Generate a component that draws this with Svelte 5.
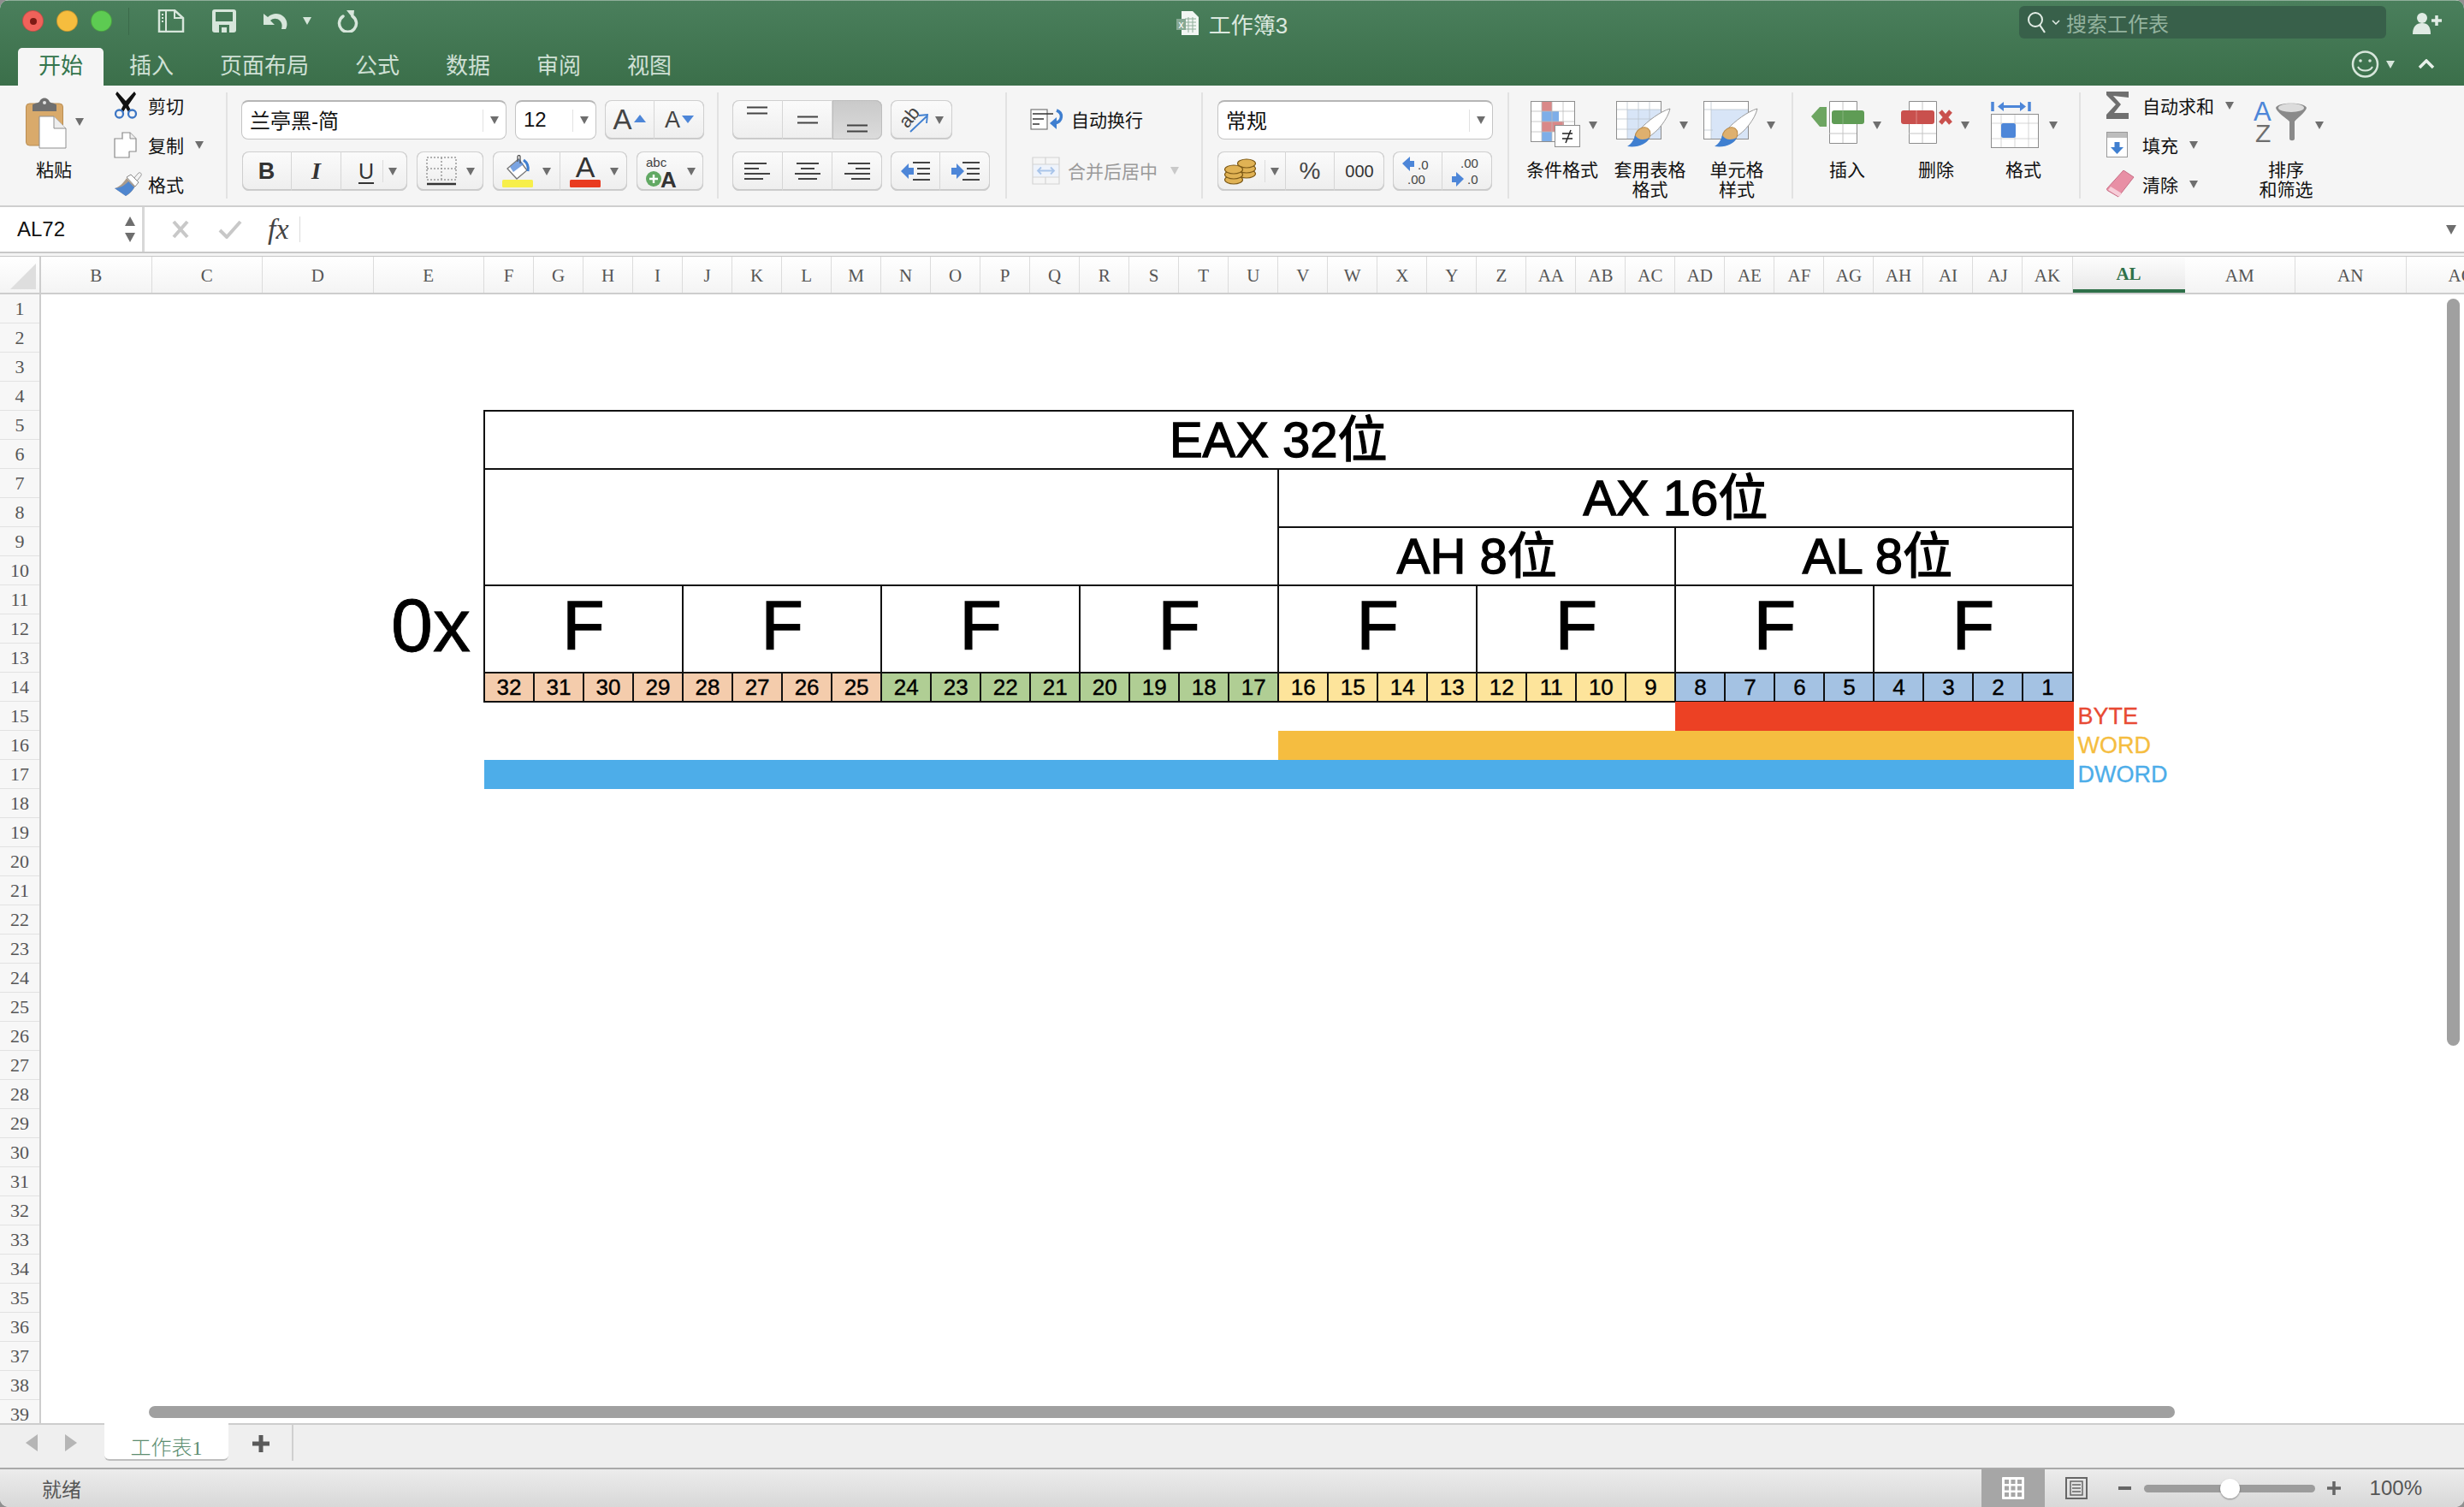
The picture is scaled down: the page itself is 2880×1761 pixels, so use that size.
<script>
  const tabs = ['开始', '插入', '页面布局', '公式', '数据', '审阅', '视图'];

  const wideCols = ['B', 'C', 'D', 'E'];
  const letters = 'FGHIJKLMNOPQRSTUVWXYZ'.split('');
  const narrowCols = [...letters, 'AA', 'AB', 'AC', 'AD', 'AE', 'AF', 'AG', 'AH', 'AI', 'AJ', 'AK'];
  const rows = Array.from({ length: 39 }, (_, i) => i + 1);

  const nibbles = Array.from({ length: 8 }, (_, i) => i);
  const bits = Array.from({ length: 32 }, (_, i) => 32 - i);
  function bitClass(n) {
    if (n > 24) return 'peach';
    if (n > 16) return 'green';
    if (n > 8) return 'yellow';
    return 'blue';
  }
</script>

<div class="window">
  <header class="titlebar">
    <div class="title-row">
      <div class="title-left">
        <span class="light red"><i></i></span>
        <span class="light amber"></span>
        <span class="light lime"></span>
        <span class="title-div"></span>
        <svg class="qa-doc" width="32" height="27" viewBox="0 0 32 27"><path d="M2 1h18l10 9v16H2z" fill="none" stroke="#d7e6db" stroke-width="2.5"/><path d="M10 1v25M20 1v9h10" fill="none" stroke="#d7e6db" stroke-width="2"/><path d="M5 6h2M5 10h2M5 14h2" stroke="#d7e6db" stroke-width="2"/></svg>
        <svg class="qa-save" width="28" height="27" viewBox="0 0 28 27"><path d="M3 0h22a3 3 0 0 1 3 3v21a3 3 0 0 1-3 3H3a3 3 0 0 1-3-3V3a3 3 0 0 1 3-3z" fill="#d7e6db"/><rect x="4" y="3" width="20" height="11" fill="#467a57"/><rect x="8" y="18" width="12" height="9" fill="#467a57"/><rect x="11" y="21" width="6" height="6" fill="#d7e6db"/></svg>
        <svg class="qa-undo" width="30" height="20" viewBox="0 0 30 20"><path d="M0 1v13h13L8 9c3-3 8-3 11 0s3 6 2 10h5c3-6 1-12-3-15S12-1 5 5z" fill="#d7e6db"/></svg>
        <span class="caret light-caret qa-caret"></span>
        <svg class="qa-redo" width="25" height="26" viewBox="0 0 25 26"><path d="M7 7a10 10 0 1 0 11 0" fill="none" stroke="#d7e6db" stroke-width="3.5" stroke-linecap="round"/><path d="M11 0l9 0-1 10z" fill="#d7e6db"/></svg>
      </div>
      <div class="doc-title">
        <svg width="27" height="28" viewBox="0 0 27 28"><path d="M6 0h13l7 7v21H6z" fill="#f2f6f3"/><path d="M10 9h13M10 13h13M10 17h13M10 21h13M14 7v18M19 7v18" stroke="#8fae9a" stroke-width="1"/><rect x="0" y="9" width="11" height="13" fill="#86a893"/><text x="2.5" y="19.5" class="t-x">x</text></svg>
        <span>工作簿3</span>
      </div>
      <div class="title-right">
        <div class="search">
          <svg width="24" height="26" viewBox="0 0 24 26"><circle cx="10" cy="10" r="8" fill="none" stroke="#e3ede6" stroke-width="2"/><path d="M15 16l6 9" stroke="#e3ede6" stroke-width="2.2"/></svg>
          <svg class="search-chev" width="10" height="6" viewBox="0 0 10 6"><path d="M1 1l4 4 4-4" fill="none" stroke="#e3ede6" stroke-width="1.5"/></svg>
          <span>搜索工作表</span>
        </div>
        <svg class="user-add" width="35" height="25" viewBox="0 0 35 25"><circle cx="11" cy="6" r="6" fill="#e0ebe4"/><path d="M0 25c0-9 4-13 11-13s10 4 10 13z" fill="#e0ebe4"/><path d="M22 9h12M28 3v12" stroke="#e0ebe4" stroke-width="3.5"/></svg>
      </div>
    </div>
    <div class="tab-row">
      <nav class="tabs">
        {#each tabs as t, i}
          <span class="tab" class:active={i === 0}>{t}</span>
        {/each}
      </nav>
      <div class="tab-tools">
        <svg width="33" height="32" viewBox="0 0 33 32"><circle cx="16.5" cy="16" r="14.5" fill="none" stroke="#d7e6db" stroke-width="2.5"/><circle cx="11" cy="12" r="1.8" fill="#d7e6db"/><circle cx="22" cy="12" r="1.8" fill="#d7e6db"/><path d="M8 19c3 6 14 6 17 0" fill="none" stroke="#d7e6db" stroke-width="2"/></svg>
        <span class="caret light-caret"></span>
        <svg class="collapse" width="20" height="12" viewBox="0 0 20 12"><path d="M2 10l8-8 8 8" fill="none" stroke="#e8f0ea" stroke-width="3.5"/></svg>
      </div>
    </div>
  </header>

  <section class="ribbon">
    <div class="group g-clip">
      <div class="big b-paste">
        <div class="big-icon">
          <svg width="48" height="60" viewBox="0 0 48 60"><rect x="0.500" y="7" width="43" height="49" rx="4" fill="#d9aa6b" stroke="#b98d52"/><path d="M8 16V9c0-2 5-2 8-4 2-6 10-6 12 0 3 2 8 2 8 4v7z" fill="#6f6f6f"/><circle cx="22" cy="6" r="2" fill="#e2e2e2"/><path d="M16 22h17l14 14v23H16z" fill="#fff" stroke="#8f8f8f"/><path d="M33 22v14h14" fill="#eeeeee" stroke="#8f8f8f"/></svg>
          <span class="caret"></span>
        </div>
        <div class="big-label">粘贴</div>
      </div>
      <div class="stack s-clip">
        <div class="small">
          <span class="slot"><svg width="28" height="32" viewBox="0 0 28 32"><path d="M4 0l10 11L24 0l2 3-9 13 3 6-3 2-3-5-3 5-3-2 3-6L2 3z" fill="#111"/><circle cx="6.500" cy="26" r="4.500" fill="none" stroke="#3d76c4" stroke-width="2.300"/><circle cx="21.500" cy="26" r="4.500" fill="none" stroke="#3d76c4" stroke-width="2.300"/></svg></span>
          <span>剪切</span>
        </div>
        <div class="small">
          <span class="slot"><svg width="27" height="31" viewBox="0 0 27 31"><path d="M10 1h9l7 7v15H10z" fill="#fff" stroke="#8a8a8a" stroke-width="1.200"/><path d="M19 1v7h7" fill="#eee" stroke="#8a8a8a"/><path d="M10 8H1v22h17v-7" fill="#fff" stroke="#8a8a8a" stroke-width="1.200"/></svg></span>
          <span>复制</span><span class="caret"></span>
        </div>
        <div class="small">
          <span class="slot"><svg width="33" height="29" viewBox="0 0 33 29"><path d="M22 9l7-8c2-1 4 1 3 3l-6 8z" fill="#f4f4f4" stroke="#999"/><path d="M15 6l5-3 9 9-4 5z" fill="#fff" stroke="#888"/><path d="M1 19c5-1 10-6 14-12l10 10c-3 5-7 9-11 11z" fill="#a99b8c"/><path d="M1 19c5 0 12-3 16-8l7 7c-3 5-7 8-10 10z" fill="#4f86cf"/></svg></span>
          <span>格式</span>
        </div>
      </div>
    </div>

    <div class="group g-font">
      <div class="ctl-row">
        <div class="combo c-font"><span class="combo-text">兰亭黑-简</span><span class="combo-sep"></span><span class="caret"></span></div>
        <div class="combo c-size"><span class="combo-text">12</span><span class="combo-sep"></span><span class="caret"></span></div>
        <div class="seg">
          <span class="cell w58 fs-a"><em class="a-big">A</em><i class="tri-up"></i></span>
          <span class="cell w58 fs-a last"><em class="a-small">A</em><i class="tri-down"></i></span>
        </div>
      </div>
      <div class="ctl-row row-format">
        <div class="seg">
          <span class="cell w58 t-b">B</span>
          <span class="cell w58 t-i">I</span>
          <span class="cell w77 last"><span class="t-u">U</span><span class="thin"></span><span class="caret"></span></span>
        </div>
        <div class="seg">
          <span class="cell w78 last">
            <svg width="36" height="34" viewBox="0 0 36 34"><path d="M1 1h34v26H1zM1 14h34M18 1v26" fill="none" stroke="#999" stroke-width="1.500" stroke-dasharray="2 2"/><path d="M1 32h34" stroke="#333" stroke-width="2.500"/></svg>
            <span class="caret c-right"></span>
          </span>
        </div>
        <div class="seg">
          <span class="cell w79">
            <svg width="36" height="38" viewBox="0 0 36 38"><path d="M6 16L19 5l10 13-12 10z" fill="#fff" stroke="#777" stroke-width="1.300"/><path d="M9 14l11-9 5 6-12 9z" fill="#4d86d8" opacity=".75"/><path d="M25 6c4 3 6 8 5 13" fill="none" stroke="#3f7fd0" stroke-width="3"/><path d="M18 8V2c0-2 3-2 3 0v8" fill="none" stroke="#555" stroke-width="1.300"/><rect x="0" y="29" width="36" height="9" rx="1.500" fill="#f7ef4b"/></svg>
            <span class="caret c-right"></span>
          </span>
          <span class="cell w78 last">
            <svg width="36" height="38" viewBox="0 0 36 38"><text x="18" y="26" text-anchor="middle" class="t-fa">A</text><rect x="0" y="29" width="36" height="9" rx="1.500" fill="#e93b20"/></svg>
            <span class="caret c-right"></span>
          </span>
        </div>
        <div class="seg">
          <span class="cell w78 last">
            <svg width="38" height="38" viewBox="0 0 38 38"><text x="1" y="14" class="t-abc">abc</text><circle cx="10" cy="28" r="9" fill="#62a964"/><path d="M5 28h10M10 23v10" stroke="#fff" stroke-width="2.400"/><text x="18" y="38" class="t-abca">A</text></svg>
            <span class="caret c-right"></span>
          </span>
        </div>
      </div>
    </div>

    <div class="group g-align">
      <div class="ctl-row">
        <div class="seg">
          <span class="cell w59"><svg class="va-top" width="24" height="10" viewBox="0 0 24 10"><path d="M0 1.500h24M0 8.500h24" stroke="#444" stroke-width="2.200"/></svg></span>
          <span class="cell w58"><svg width="24" height="10" viewBox="0 0 24 10"><path d="M0 1.500h24M0 8.500h24" stroke="#444" stroke-width="2.200"/></svg></span>
          <span class="cell w58 pressed last"><svg class="va-bottom" width="24" height="10" viewBox="0 0 24 10"><path d="M0 1.500h24M0 8.500h24" stroke="#444" stroke-width="2.200"/></svg></span>
        </div>
        <div class="seg">
          <span class="cell w72 last">
            <svg width="36" height="32" viewBox="0 0 36 32"><text x="12" y="20" text-anchor="middle" class="t-ab" transform="rotate(-50 12 13)">ab</text><path d="M13 30L32 12M23 11l10-1-1 10" fill="none" stroke="#3f7fd0" stroke-width="1.800"/></svg>
            <span class="caret c-tight"></span>
          </span>
        </div>
      </div>
      <div class="ctl-row">
        <div class="seg">
          <span class="cell w59"><svg width="30" height="22" viewBox="0 0 30 22"><path d="M0 2h26M0 8h17M0 14h30M0 20h22" stroke="#444" stroke-width="2"/></svg></span>
          <span class="cell w58"><svg width="30" height="22" viewBox="0 0 30 22"><path d="M2 2h26M7 8h16M0 14h30M4 20h22" stroke="#444" stroke-width="2"/></svg></span>
          <span class="cell w58 last"><svg width="30" height="22" viewBox="0 0 30 22"><path d="M4 2h26M13 8h17M0 14h30M8 20h22" stroke="#444" stroke-width="2"/></svg></span>
        </div>
        <div class="seg">
          <span class="cell w58"><svg width="34" height="22" viewBox="0 0 34 22"><path d="M0 11l9-9v5h6v8H9v5z" fill="#4d86d8"/><path d="M14 1h20M19 8h15M19 14h15M14 21h20" stroke="#444" stroke-width="2"/></svg></span>
          <span class="cell w58 last"><svg width="34" height="22" viewBox="0 0 34 22"><path d="M16 11L7 2v5H1v8h6v5z" fill="#4d86d8"/><path d="M14 1h20M19 8h15M19 14h15M14 21h20" stroke="#444" stroke-width="2"/></svg></span>
        </div>
      </div>
    </div>

    <div class="group g-wrap">
      <div class="wrap-row">
        <svg width="39" height="25" viewBox="0 0 39 25"><rect x="1" y="1" width="19" height="23" fill="#fff" stroke="#777" stroke-width="1.200"/><path d="M3 6h24M3 12h13M3 18h8" stroke="#333" stroke-width="1.600"/><path d="M31 2c8 3 7 13-2 15" fill="none" stroke="#3f7fd0" stroke-width="3.500"/><path d="M31 10v14l-8-7z" fill="#3f7fd0"/></svg>
        <span>自动换行</span>
      </div>
      <div class="wrap-row muted">
        <svg width="33" height="33" viewBox="0 0 33 33"><path d="M1 9h31v15H1z" fill="#eef3fb"/><path d="M1 1h31v31H1zM1 9h31M1 24h31M16 1v8M16 24v8" fill="none" stroke="#d4d4d4" stroke-width="1.200"/><path d="M7 16.500h19M11 12.500l-4 4 4 4M22 12.500l4 4-4 4" fill="none" stroke="#a9c5ea" stroke-width="1.800"/></svg>
        <span>合并后居中</span><span class="caret faint"></span>
      </div>
    </div>

    <div class="group g-num">
      <div class="ctl-row">
        <div class="combo c-num"><span class="combo-text">常规</span><span class="combo-sep"></span><span class="caret"></span></div>
      </div>
      <div class="ctl-row">
        <div class="seg">
          <span class="cell w80">
            <svg width="37" height="31" viewBox="0 0 37 31"><g fill="#e0b254" stroke="#7d5a18" stroke-width="1.200"><ellipse cx="26" cy="18" rx="10.500" ry="5"/><ellipse cx="26" cy="12" rx="10.500" ry="5"/><ellipse cx="26" cy="6" rx="10.500" ry="5"/><ellipse cx="11" cy="25" rx="10.500" ry="5"/><ellipse cx="11" cy="19" rx="10.500" ry="5"/><ellipse cx="11" cy="13" rx="10.500" ry="5"/></g></svg>
            <span class="thin"></span><span class="caret"></span>
          </span>
          <span class="cell w57 t-pct">%</span>
          <span class="cell w58 last t-000">000</span>
        </div>
        <div class="seg">
          <span class="cell w58"><svg width="40" height="36" viewBox="0 0 40 36"><path d="M2 9l9-8v5h5v7h-5v5z" fill="#4d86d8"/><text x="20" y="16" class="t-dec">.0</text><text x="8" y="33" class="t-dec">.00</text></svg></span>
          <span class="cell w58 last"><svg width="40" height="36" viewBox="0 0 40 36"><text x="12" y="14" class="t-dec">.00</text><path d="M16 27l-9-8v5H2v7h5v5z" fill="#4d86d8"/><text x="20" y="33" class="t-dec">.0</text></svg></span>
        </div>
      </div>
    </div>

    <div class="group g-styles">
      <div class="big b-cf">
        <div class="big-icon">
          <svg width="58" height="54" viewBox="0 0 58 54"><rect x=".5" y=".5" width="51" height="47" fill="#fff" stroke="#8d8d8d"/><rect x="13" y="1" width="12" height="11" fill="#d98888"/><rect x="13" y="12" width="20" height="12" fill="#7eaee8"/><rect x="13" y="24" width="26" height="12" fill="#d98888"/><rect x="13" y="36" width="12" height="11" fill="#7eaee8"/><path d="M1 12h50M1 24h50M1 36h50M13 1v46M25 1v46M38 1v46" stroke="#bbb" stroke-width=".8" fill="none"/><rect x="28.500" y="28.500" width="29" height="25" fill="#fff" stroke="#8d8d8d"/><path d="M37 38h12M37 44h12M47 34l-6 15" stroke="#222" stroke-width="1.500"/></svg>
          <span class="caret"></span>
        </div>
        <div class="big-label">条件格式</div>
      </div>
      <div class="big b-tbl">
        <div class="big-icon">
          <svg width="64" height="55" viewBox="0 0 64 55"><rect x=".5" y=".5" width="52" height="44" fill="#fff" stroke="#8d8d8d"/><rect x="13" y="10" width="39" height="34" fill="#d8e5f7"/><path d="M1 10h51M1 21h51M1 33h51M13 1v43M26 1v43M39 1v43" stroke="#bcc5ce" stroke-width=".8"/><path d="M63 9C60 22 48 36 38 42L28 33C36 24 52 12 63 9z" fill="#fff" stroke="#9a9a9a"/><ellipse cx="31" cy="40" rx="8" ry="10" transform="rotate(40 31 40)" fill="#deb06e" stroke="#b98a4a"/><path d="M13 53C18 50 21 45 22 40c4 6 10 6 17 3-3 7-14 12-26 10z" fill="#3f7fd0"/></svg>
          <span class="caret"></span>
        </div>
        <div class="big-label">套用表格<br />格式</div>
      </div>
      <div class="big b-cell">
        <div class="big-icon">
          <svg width="64" height="55" viewBox="0 0 64 55"><rect x=".5" y=".5" width="52" height="44" fill="#fff" stroke="#8d8d8d"/><rect x="9" y="10" width="43" height="34" fill="#d8e5f7"/><path d="M1 10h51M1 34h10M9 1v43" stroke="#bcc5ce" stroke-width=".8"/><path d="M63 9C60 22 48 36 38 42L28 33C36 24 52 12 63 9z" fill="#fff" stroke="#9a9a9a"/><ellipse cx="31" cy="40" rx="8" ry="10" transform="rotate(40 31 40)" fill="#deb06e" stroke="#b98a4a"/><path d="M13 53C18 50 21 45 22 40c4 6 10 6 17 3-3 7-14 12-26 10z" fill="#3f7fd0"/></svg>
          <span class="caret"></span>
        </div>
        <div class="big-label">单元格<br />样式</div>
      </div>
    </div>

    <div class="group g-cells">
      <div class="big b-ins">
        <div class="big-icon">
          <svg width="62" height="50" viewBox="0 0 62 50"><path d="M21.500.5h32v49h-32z" fill="#fff" stroke="#8d8d8d"/><path d="M37 1v10M21 38h32M37 26v23" stroke="#c4c4c4"/><rect x="24" y="11" width="38" height="16" rx="3" fill="#5f9c55"/><path d="M37 11v16" stroke="#84b37c"/><path d="M0 18L10 7h8v23h-8z" fill="#6da561"/></svg>
          <span class="caret"></span>
        </div>
        <div class="big-label">插入</div>
      </div>
      <div class="big b-del">
        <div class="big-icon">
          <svg width="60" height="50" viewBox="0 0 60 50"><path d="M9.500.5h32v49h-32z" fill="#fff" stroke="#8d8d8d"/><path d="M25 1v10M9 38h32M25 26v23" stroke="#c4c4c4"/><rect x="0" y="11" width="39" height="16" rx="3" fill="#c9504d"/><path d="M18 11v16" stroke="#dd8785"/><path d="M46 12l12 14M58 12L46 26" stroke="#c9504d" stroke-width="5"/></svg>
          <span class="caret"></span>
        </div>
        <div class="big-label">删除</div>
      </div>
      <div class="big b-fmt">
        <div class="big-icon">
          <svg width="58" height="56" viewBox="0 0 58 56"><path d="M2 1v11M45 1v11" stroke="#4d86d8" stroke-width="3.500"/><path d="M11 6.500h27" stroke="#4d86d8" stroke-width="3"/><path d="M8 6.500L15 1v11zM41 6.500L34 1v11z" fill="#4d86d8"/><rect x=".5" y="15.500" width="55" height="39" fill="#fff" stroke="#8d8d8d"/><path d="M1 26h54M1 44h54M12 16v38M28 16v38M44 16v38" stroke="#ccc" stroke-width=".8"/><rect x="12" y="26" width="17" height="17" rx="2.500" fill="#4d86d8"/></svg>
          <span class="caret"></span>
        </div>
        <div class="big-label">格式</div>
      </div>
    </div>

    <div class="group g-edit">
      <div class="stack s-edit">
        <div class="small">
          <span class="slot"><svg width="26" height="32" viewBox="0 0 26 32"><path d="M26 7V0H0v4l11 11L0 27v5h26v-7H9l8-10L8 5z" fill="#6f6f6f"/></svg></span>
          <span>自动求和</span><span class="caret"></span>
        </div>
        <div class="small">
          <span class="slot"><svg width="25" height="30" viewBox="0 0 25 30"><rect x=".5" y=".5" width="24" height="29" fill="#fff" stroke="#9a9a9a"/><rect x="1" y="1" width="23" height="6" fill="#bdbdbd"/><path d="M12.500 12v8" stroke="#3f7fd0" stroke-width="6"/><path d="M5 18h15l-7.500 8z" fill="#3f7fd0"/></svg></span>
          <span>填充</span><span class="caret"></span>
        </div>
        <div class="small">
          <span class="slot"><svg width="33" height="32" viewBox="0 0 33 32"><path d="M20 0l12 8L14 31 2 24c-2-1-2-2-1-3z" fill="#e88fa5" stroke="#c76f87"/><path d="M2 23l13 8 3-4-13-8z" fill="#f6cdd8"/></svg></span>
          <span>清除</span><span class="caret"></span>
        </div>
      </div>
      <div class="big b-sort">
        <div class="big-icon">
          <svg width="62" height="49" viewBox="0 0 62 49"><text x="0" y="23" class="t-sa">A</text><text x="2" y="48" class="t-sz">Z</text><path d="M26 8c2-7 34-7 36 0-1 5-11 12-14 16v20c0 3-6 3-6 0V24C38 20 27 13 26 8z" fill="#8a8a8a"/><ellipse cx="44" cy="8" rx="15" ry="5" fill="#dcdcdc"/></svg>
          <span class="caret"></span>
        </div>
        <div class="big-label">排序<br />和筛选</div>
      </div>
    </div>
  </section>

  <section class="formula">
    <div class="namebox">
      <span>AL72</span>
      <div class="spin"><i class="spin-up"></i><i class="spin-down"></i></div>
    </div>
    <svg class="fx-x" width="22" height="22" viewBox="0 0 22 22"><path d="M3 2l16 18M19 2L3 20" stroke="#c8c8c8" stroke-width="4"/></svg>
    <svg class="fx-ok" width="28" height="22" viewBox="0 0 28 22"><path d="M2 12l8 8L26 2" fill="none" stroke="#c8c8c8" stroke-width="4"/></svg>
    <span class="fx-label">fx</span>
    <span class="fx-sep"></span>
    <span class="fx-input"></span>
    <span class="fx-caret"></span>
  </section>
  <div class="fx-rule"></div>

  <section class="col-header">
    <div class="corner"><span></span></div>
    {#each wideCols as c}<div class="col wide">{c}</div>{/each}
    {#each narrowCols as c}<div class="col narrow">{c}</div>{/each}
    <div class="col sel">AL</div>
    <div class="col wide">AM</div>
    <div class="col wide">AN</div>
    <div class="col wide">AO</div>
  </section>

  <section class="sheet">
    <div class="row-header">
      {#each rows as r}<div class="rownum">{r}</div>{/each}
    </div>
    <div class="canvas">
      <div class="diagram">
        <div class="cell-d big-t eax"><span>EAX 32位</span></div>
        <div class="cell-d blank"></div>
        <div class="cell-d big-t ax"><span>AX 16位</span></div>
        <div class="cell-d big-t ah"><span>AH 8位</span></div>
        <div class="cell-d big-t al"><span>AL 8位</span></div>
        <div class="hex-prefix">0x</div>
        {#each nibbles as n (n)}<div class="cell-d nib"><span>F</span></div>{/each}
        <div class="bit-lead"></div>
        {#each bits as b (b)}<div class="cell-d bit {bitClass(b)}">{b}</div>{/each}
        <div class="bar byte"></div>
        <div class="bar-label l-byte">BYTE</div>
        <div class="bar word"></div>
        <div class="bar-label l-word">WORD</div>
        <div class="bar dword"></div>
        <div class="bar-label l-dword">DWORD</div>
      </div>
      <div class="vscroll"></div>
      <div class="hscroll"></div>
    </div>
  </section>

  <section class="sheet-tabs">
    <div class="nav-arrows"><i class="arr-l"></i><i class="arr-r"></i></div>
    <div class="sheet-tab">工作表1</div>
    <div class="add-sheet"><svg width="20" height="20" viewBox="0 0 20 20"><path d="M0 10h20M10 0v20" stroke="#5a5a5a" stroke-width="5"/></svg></div>
  </section>

  <footer class="status">
    <span class="ready">就绪</span>
    <div class="status-right">
      <span class="view active">
        <svg width="26" height="26" viewBox="0 0 26 26"><rect width="26" height="26" rx="1" fill="#fff"/><path d="M3 3h5v5H3zM10.500 3h5v5h-5zM18 3h5v5h-5zM3 10.500h5v5H3zM10.500 10.500h5v5h-5zM18 10.500h5v5h-5zM3 18h5v5H3zM10.500 18h5v5h-5zM18 18h5v5h-5z" fill="#a6a6a6"/></svg>
      </span>
      <span class="view">
        <svg width="26" height="26" viewBox="0 0 26 26"><rect x="1" y="1" width="24" height="24" fill="none" stroke="#666" stroke-width="2"/><rect x="6" y="5" width="14" height="16" fill="none" stroke="#666" stroke-width="1.500"/><path d="M8 9h10M8 13h10M8 17h10" stroke="#666" stroke-width="1.500"/></svg>
      </span>
      <span class="zoom-minus"></span>
      <div class="slider"><span class="thumb"></span></div>
      <svg class="zoom-plus" width="16" height="16" viewBox="0 0 16 16"><path d="M0 8h16M8 0v16" stroke="#666" stroke-width="3.500"/></svg>
      <span class="pct">100%</span>
    </div>
  </footer>
</div>

<style>
  :global(body) {
    margin: 0;
    background: #8f8f8f;
  }
  .window {
    width: 2880px;
    height: 1761px;
    display: flex;
    flex-direction: column;
    overflow: hidden;
    border-radius: 10px;
    background: #fff;
    font-family: "Liberation Sans", "Noto Sans CJK SC", sans-serif;
    color: #222;
  }

  /* title bar */
  .titlebar {
    height: 100px;
    flex: none;
    box-sizing: border-box;
    border-top: 1px solid #8fae9a;
    background: linear-gradient(#4a7f5c, #3b6f4a);
    display: flex;
    flex-direction: column;
  }
  .title-row {
    height: 55px;
    display: grid;
    grid-template-columns: 1fr auto 1fr;
    align-items: center;
  }
  .title-left {
    display: flex;
    align-items: center;
    padding-left: 26px;
    padding-bottom: 5px;
  }
  .light {
    width: 25px;
    height: 25px;
    border-radius: 50%;
    margin-right: 15px;
    box-sizing: border-box;
    border: 1px solid rgba(0, 0, 0, 0.2);
    display: flex;
    align-items: center;
    justify-content: center;
  }
  .light.red { background: #f0625a; }
  .light.red i {
    width: 8px;
    height: 8px;
    border-radius: 50%;
    background: #7d1a14;
  }
  .light.amber { background: #f6bd3e; }
  .light.lime { background: #5dcb52; }
  .title-div {
    width: 1px;
    height: 32px;
    background: #3b6a4a;
    margin-left: 4px;
    margin-right: 33px;
  }
  .qa-save { margin-left: 32px; }
  .qa-undo { margin-left: 32px; }
  .qa-caret { margin-left: 16px; }
  .qa-redo { margin-left: 30px; }

  .doc-title {
    display: flex;
    align-items: center;
    gap: 11px;
    color: #dbe8df;
    font-size: 26px;
    padding-bottom: 0;
  }
  .t-x { font-size: 12px; fill: #fff; font-family: "Liberation Sans", sans-serif; }

  .title-right {
    display: flex;
    justify-content: flex-end;
    align-items: flex-start;
    padding-top: 6px;
    height: 100%;
    box-sizing: border-box;
  }
  .search {
    width: 429px;
    height: 38px;
    box-sizing: border-box;
    background: #38604a;
    border-radius: 6px;
    display: flex;
    align-items: center;
    padding-left: 9px;
    color: #93b29e;
    font-size: 24px;
  }
  .search-chev { margin: 0 7px 0 5px; }
  .user-add { margin: 8px 25px 0 31px; }

  .tab-row {
    flex: 1;
    display: flex;
    justify-content: space-between;
    align-items: flex-end;
  }
  .tabs {
    display: flex;
    gap: 6px;
    margin-left: 21px;
  }
  .tab {
    height: 44px;
    padding: 0 24px;
    font-size: 26px;
    line-height: 42px;
    color: #cfe0d5;
    border-radius: 5px 5px 0 0;
  }
  .tab.active {
    background: #f5f5f5;
    color: #34754d;
  }
  .tab-tools {
    display: flex;
    align-items: center;
    height: 44px;
    padding-right: 34px;
    margin-bottom: 3px;
  }
  .tab-tools .caret { margin-left: 8px; }
  .collapse { margin-left: 27px; }

  /* ribbon */
  .ribbon {
    height: 142px;
    flex: none;
    box-sizing: border-box;
    display: flex;
    background: #f5f5f5;
    border-bottom: 2px solid #cfcfcf;
    font-size: 21px;
  }
  .group {
    position: relative;
    box-sizing: border-box;
    display: flex;
    flex: none;
  }
  .group::after {
    content: "";
    position: absolute;
    right: 0;
    top: 8px;
    height: 124px;
    width: 2px;
    background: #e2e2e2;
  }
  .g-clip { width: 266px; }
  .g-font { width: 574px; padding-left: 16px; }
  .g-align { width: 337px; padding-left: 16px; }
  .g-wrap { width: 229px; padding-left: 27px; }
  .g-num { width: 358px; padding-left: 17px; }
  .g-styles { width: 332px; padding-left: 16px; }
  .g-cells { width: 336px; padding-left: 12px; }
  .g-edit { flex: 1; }
  .g-edit::after { display: none; }
  .g-font, .g-align, .g-num {
    flex-direction: column;
    padding-top: 17px;
    gap: 14px;
  }
  .ctl-row {
    display: flex;
    height: 46px;
    gap: 10px;
  }
  .row-format { margin-left: 1px; gap: 11px; }

  .caret {
    display: inline-block;
    flex: none;
    width: 0;
    height: 0;
    border-left: 5px solid transparent;
    border-right: 5px solid transparent;
    border-top: 9px solid #6e6e6e;
  }
  .caret.faint { border-top-color: #c9c9c9; }
  .caret.light-caret { border-top-color: #d7e6db; }

  .combo {
    box-sizing: border-box;
    height: 46px;
    border: 1px solid #c4c4c4;
    border-top: 2px solid #b5b5b5;
    border-radius: 8px;
    background: #fff;
    display: flex;
    align-items: center;
    font-size: 24px;
  }
  .combo-text { flex: 1; padding: 0 0 2px 9px; color: #111; }
  .combo-sep { width: 1px; height: 26px; background: #e2e2e2; margin-right: 8px; }
  .combo .caret { margin-right: 8px; }
  .c-font { width: 310px; }
  .c-size { width: 95px; }
  .c-num { width: 322px; }

  .seg {
    display: flex;
    height: 46px;
    box-sizing: border-box;
    border-radius: 8px;
    background: linear-gradient(#fbfbfb, #eeeeee);
    box-shadow: inset 0 0 0 1px #cfcfcf, inset 0 -1px 0 1px #c8c8c8;
  }
  .seg .cell {
    box-sizing: border-box;
    display: flex;
    align-items: center;
    justify-content: center;
    border-right: 1px solid #d6d6d6;
    flex: none;
  }
  .seg .cell.last { border-right: none; }
  .w57 { width: 57px; }
  .w58 { width: 58px; }
  .w59 { width: 59px; }
  .w72 { width: 72px; }
  .w77 { width: 77px; }
  .w78 { width: 78px; }
  .w79 { width: 79px; }
  .w80 { width: 80px; }
  .seg .cell.pressed {
    background: linear-gradient(#c9c9c9, #dcdcdc);
    border-radius: 0 8px 8px 0;
    box-shadow: inset 0 0 0 1px #bdbdbd;
  }
  .thin {
    width: 1px;
    height: 26px;
    background: #dcdcdc;
    margin: 0 6px 0 10px;
  }
  .c-right { margin-left: 11px; }
  .c-tight { margin-left: 6px; }
  .va-top { transform: translateY(-11px); }
  .va-bottom { transform: translateY(10px); }

  .fs-a { gap: 2px; }
  .a-big { font-style: normal; font-size: 33px; color: #444; }
  .a-small { font-style: normal; font-size: 27px; color: #444; }
  .tri-up, .tri-down {
    width: 0;
    height: 0;
    border-left: 7px solid transparent;
    border-right: 7px solid transparent;
  }
  .tri-up { border-bottom: 9px solid #4d86d8; margin-bottom: 4px; }
  .tri-down { border-top: 9px solid #4d86d8; margin-bottom: 2px; }
  .t-b { font-weight: 700; font-size: 27px; color: #333; }
  .t-i { font-family: "Liberation Serif", serif; font-style: italic; font-weight: 700; font-size: 28px; color: #333; }
  .t-u { font-size: 25px; color: #333; text-decoration: underline; text-underline-offset: 4px; margin-left: 8px; }
  .t-fa { font-size: 34px; fill: #333; font-family: "Liberation Sans", sans-serif; }
  .t-abc { font-size: 15px; fill: #444; font-family: "Liberation Sans", sans-serif; }
  .t-abca { font-size: 26px; font-weight: 700; fill: #333; font-family: "Liberation Sans", sans-serif; }
  .t-ab { font-size: 22px; fill: #444; font-family: "Liberation Sans", sans-serif; }
  .t-pct { font-size: 28px; color: #444; }
  .t-000 { font-size: 20px; color: #333; }
  .t-dec { font-size: 15px; fill: #444; font-family: "Liberation Sans", sans-serif; }
  .t-sa { font-size: 31px; fill: #4d86d8; font-family: "Liberation Sans", sans-serif; }
  .t-sz { font-size: 30px; fill: #6e6e6e; font-family: "Liberation Sans", sans-serif; }

  .big {
    flex: none;
    box-sizing: border-box;
    display: flex;
    flex-direction: column;
    padding-top: 18px;
  }
  .big-icon {
    height: 69px;
    display: flex;
    align-items: flex-start;
  }
  .big-icon .caret { margin-top: 24px; margin-left: 10px; }
  .big-label {
    text-align: center;
    line-height: 23px;
    font-size: 21px;
    color: #111;
  }
  .b-paste { width: 126px; padding-top: 14px; }
  .b-paste .big-icon { padding-left: 30px; height: 73px; }
  .b-cf { width: 92px; }
  .b-cf .big-icon { padding-left: 9px; }
  .b-tbl { width: 113px; }
  .b-tbl .big-icon { padding-left: 17px; }
  .b-cell { width: 90px; }
  .b-cell .big-icon { padding-left: 6px; }
  .b-ins { width: 102px; }
  .b-ins .big-icon { padding-left: 9px; }
  .b-del { width: 106px; }
  .b-del .big-icon { padding-left: 12px; }
  .b-fmt { width: 98px; }
  .b-fmt .big-icon { padding-left: 11px; align-items: flex-start; }
  .b-sort { width: 120px; }
  .b-sort .big-icon { padding-left: 22px; }

  .stack {
    display: flex;
    flex-direction: column;
  }
  .small {
    height: 46px;
    display: flex;
    align-items: center;
    font-size: 21px;
    color: #111;
  }
  .small .caret { margin-left: 13px; }
  .slot {
    width: 45px;
    display: flex;
    align-items: center;
  }
  .s-clip { margin-left: 2px; }
  .s-clip .slot svg { margin-left: 5px; }
  .s-edit { width: 150px; margin-left: 30px; }
  .s-edit .slot { width: 42px; }

  .wrap-row {
    display: flex;
    align-items: center;
    gap: 9px;
    height: 44px;
    color: #111;
  }
  .wrap-row.muted { color: #9a9a9a; margin-top: 16px; }
  .wrap-row.muted svg { margin-left: 2px; }
  .wrap-row.muted .caret { margin-left: 6px; }
  .g-wrap { flex-direction: column; padding-top: 17px; }

  /* formula bar */
  .formula {
    height: 52px;
    flex: none;
    display: flex;
    align-items: center;
    background: #fff;
  }
  .namebox {
    width: 169px;
    height: 100%;
    box-sizing: border-box;
    border-right: 3px solid #d8d8d8;
    display: flex;
    align-items: center;
    justify-content: space-between;
    padding: 0 8px 0 20px;
    font-size: 24px;
    color: #111;
  }
  .spin { display: flex; flex-direction: column; gap: 8px; }
  .spin i {
    display: block;
    width: 0;
    height: 0;
    border-left: 6px solid transparent;
    border-right: 6px solid transparent;
  }
  .spin-up { border-bottom: 11px solid #6e6e6e; }
  .spin-down { border-top: 11px solid #6e6e6e; }
  .fx-x { margin-left: 31px; }
  .fx-ok { margin-left: 33px; }
  .fx-label {
    margin-left: 30px;
    font-family: "Liberation Serif", serif;
    font-style: italic;
    font-size: 34px;
    color: #444;
  }
  .fx-sep {
    width: 1px;
    height: 30px;
    background: #dcdcdc;
    margin-left: 12px;
  }
  .fx-input { flex: 1; }
  .fx-caret {
    width: 0;
    height: 0;
    border-left: 6px solid transparent;
    border-right: 6px solid transparent;
    border-top: 11px solid #6e6e6e;
    margin-right: 9px;
  }
  .fx-rule {
    height: 6px;
    flex: none;
    box-sizing: border-box;
    background: #f4f4f4;
    border-top: 2px solid #c8c8c8;
    border-bottom: 1px solid #c8c8c8;
  }

  /* sheet headers */
  .col-header {
    height: 44px;
    flex: none;
    box-sizing: border-box;
    display: flex;
    border-bottom: 2px solid #cdcdcd;
    background: linear-gradient(#fff, #f4f4f4);
    overflow: hidden;
  }
  .corner {
    width: 48px;
    flex: none;
    box-sizing: border-box;
    border-right: 2px solid #cdcdcd;
    position: relative;
  }
  .corner span {
    position: absolute;
    right: 4px;
    bottom: 4px;
    border-left: 30px solid transparent;
    border-bottom: 30px solid #dedede;
  }
  .col {
    flex: none;
    box-sizing: border-box;
    border-right: 1px solid #dcdcdc;
    display: flex;
    align-items: center;
    justify-content: center;
    padding-top: 2px;
    font-family: "Liberation Serif", "Noto Sans CJK SC", serif;
    font-size: 21px;
    color: #555;
  }
  .col.wide { width: 129.5px; }
  .col.narrow { width: 58.03px; }
  .col.sel {
    width: 131px;
    color: #2f7049;
    font-weight: 700;
    background: linear-gradient(#fdfdfd, #e9e9e9);
    border-bottom: 4px solid #2f7049;
    border-right: none;
  }
  .sheet {
    flex: 1;
    display: flex;
    min-height: 0;
    overflow: hidden;
  }
  .row-header {
    width: 48px;
    flex: none;
    box-sizing: border-box;
    border-right: 2px solid #cdcdcd;
    background: #f7f7f7;
  }
  .rownum {
    height: 34px;
    box-sizing: border-box;
    border-bottom: 1px solid #e2e2e2;
    display: flex;
    align-items: center;
    justify-content: center;
    font-family: "Liberation Serif", serif;
    font-size: 22px;
    color: #555;
  }
  .canvas {
    flex: 1;
    position: relative;
    padding-top: 136px;
  }

  /* register diagram */
  .diagram {
    display: grid;
    grid-template-columns: 518px repeat(32, 58.03px) 120px;
    grid-template-rows: 68px 68px 68px 102px repeat(4, 34px);
  }
  .cell-d {
    box-sizing: border-box;
    border: 2px solid #111;
    margin: -1px;
    display: flex;
    align-items: center;
    justify-content: center;
    color: #000;
  }
  .big-t {
    font-size: 58px;
    -webkit-text-stroke: 1.4px #000;
  }
  .big-t span { transform: translateY(-5px); }
  .eax { grid-area: 1 / 2 / span 1 / span 32; }
  .blank { grid-area: 2 / 2 / span 2 / span 16; }
  .ax { grid-area: 2 / 18 / span 1 / span 16; }
  .ah { grid-area: 3 / 18 / span 1 / span 8; }
  .al { grid-area: 3 / 26 / span 1 / span 8; padding-left: 8px; }
  .hex-prefix {
    grid-area: 4 / 1;
    display: flex;
    align-items: center;
    justify-content: flex-end;
    padding: 0 16px 8px 0;
    font-size: 88px;
    -webkit-text-stroke: 0.8px #000;
    color: #000;
  }
  .nib {
    grid-row: 4;
    grid-column: span 4;
    font-size: 80px;
    -webkit-text-stroke: 1.5px #000;
  }
  .nib span { transform: translateY(-4px); }
  .bit-lead { grid-area: 5 / 1; }
  .bit {
    grid-row: 5;
    font-size: 26px;
    -webkit-text-stroke: 0.4px #000;
  }
  .peach { background: #f4ccac; }
  .green { background: #b0ce94; }
  .yellow { background: #fde49b; }
  .blue { background: #a4c2e3; }
  .bar { margin-right: -1px; }
  .byte { grid-area: 6 / 26 / span 1 / span 8; background: #ec4124; }
  .word { grid-area: 7 / 18 / span 1 / span 16; background: #f5bd40; }
  .dword { grid-area: 8 / 2 / span 1 / span 32; background: #4dade9; }
  .bar-label {
    grid-column: 34;
    display: flex;
    align-items: center;
    padding-left: 6px;
    font-size: 27px;
    -webkit-text-stroke: 0.3px currentColor;
  }
  .l-byte { grid-row: 6; color: #e84a34; }
  .l-word { grid-row: 7; color: #f5bd40; }
  .l-dword { grid-row: 8; color: #4dade9; }

  /* overlay scrollbars */
  .vscroll {
    position: absolute;
    right: 5px;
    top: 5px;
    width: 15px;
    height: 873px;
    border-radius: 8px;
    background: #a0a0a0;
  }
  .hscroll {
    position: absolute;
    left: 126px;
    bottom: 6px;
    width: 2368px;
    height: 14px;
    border-radius: 7px;
    background: #a0a0a0;
  }

  /* bottom bars */
  .sheet-tabs {
    height: 52px;
    flex: none;
    box-sizing: border-box;
    display: flex;
    background: #efefef;
    border-top: 2px solid #cdcdcd;
  }
  .nav-arrows {
    width: 122px;
    box-sizing: border-box;
    display: flex;
    align-items: center;
    gap: 32px;
    padding: 0 0 8px 30px;
  }
  .nav-arrows i {
    width: 0;
    height: 0;
    border-top: 10px solid transparent;
    border-bottom: 10px solid transparent;
  }
  .arr-l { border-right: 14px solid #b5b5b5; }
  .arr-r { border-left: 14px solid #b5b5b5; }
  .sheet-tab {
    width: 145px;
    height: 44px;
    margin-top: -2px;
    box-sizing: border-box;
    background: #fff;
    border-bottom: 2px solid #bdbdbd;
    border-radius: 0 0 6px 6px;
    display: flex;
    align-items: center;
    justify-content: center;
    padding-top: 10px;
    font-family: "Liberation Serif", "Noto Sans CJK SC", serif;
    font-size: 24px;
    font-weight: 300;
    color: #5c8d70;
  }
  .add-sheet {
    width: 76px;
    height: 42px;
    box-sizing: border-box;
    border-right: 2px solid #d0d0d0;
    padding: 2px 0 0 2px;
    display: flex;
    align-items: center;
    justify-content: center;
  }
  .status {
    height: 46px;
    flex: none;
    box-sizing: border-box;
    display: flex;
    align-items: center;
    justify-content: space-between;
    border-top: 2px solid #a9a9a9;
    background: linear-gradient(#ececec, #d8d8d8);
    padding-left: 49px;
  }
  .ready { font-size: 23px; color: #555; }
  .status-right {
    display: flex;
    align-items: center;
    height: 100%;
  }
  .view {
    width: 74px;
    height: 100%;
    display: flex;
    align-items: center;
    justify-content: center;
  }
  .view.active { background: #a6a6a6; }
  .zoom-minus {
    width: 15px;
    height: 4px;
    background: #666;
    margin-left: 12px;
  }
  .slider {
    position: relative;
    width: 200px;
    height: 9px;
    border-radius: 5px;
    background: #9c9c9c;
    margin-left: 15px;
  }
  .thumb {
    position: absolute;
    left: 89px;
    top: -7px;
    width: 23px;
    height: 23px;
    border-radius: 50%;
    background: #fff;
    box-shadow: 0 1px 2px rgba(0, 0, 0, 0.4);
  }
  .zoom-plus { margin-left: 14px; }
  .pct {
    margin-left: 34px;
    margin-right: 49px;
    font-size: 24px;
    color: #555;
  }
</style>
